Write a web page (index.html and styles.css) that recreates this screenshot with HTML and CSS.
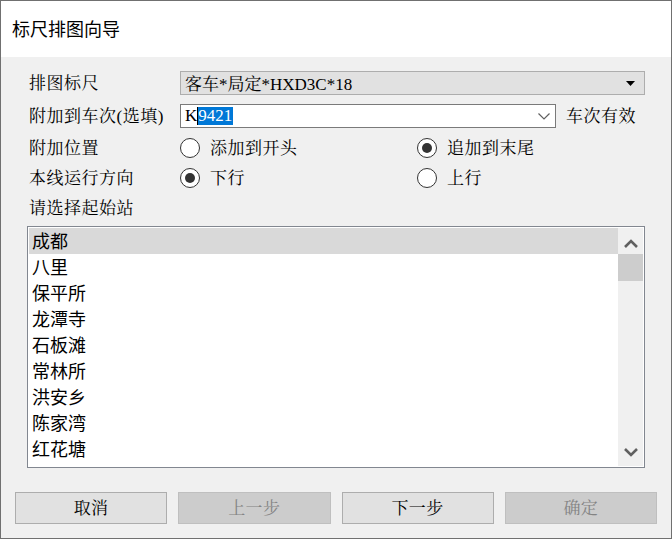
FILE: index.html
```html
<!DOCTYPE html>
<html lang="zh-CN">
<head>
  <meta charset="UTF-8">
  <title>标尺排图向导</title>
  <link rel="stylesheet" href="styles.css">
</head>
<body>
  <div class="dialog">
    <!-- Title bar -->
    <div class="titlebar">标尺排图向导</div>

    <div class="dialog-body">
      <!-- Wizard form -->
      <div class="form">
        <div class="row row-combo">
          <span class="label">排图标尺</span>
          <div class="combo combo-static">
            <span class="combo-text">客车*局定*HXD3C*18</span>
            <svg class="combo-arrow" width="9" height="5" viewBox="0 0 9 5"><path d="M0 0h9L4.5 5z" fill="#000"/></svg>
          </div>
        </div>

        <div class="row row-combo row-train">
          <span class="label">附加到车次(选填)</span>
          <div class="combo combo-edit">
            <span class="combo-text">K<span class="caret"></span><span class="selected">9421</span></span>
            <svg class="combo-chevron" width="12" height="7" viewBox="0 0 12 7"><path d="M0.5 0.5L6 6l5.5-5.5" fill="none" stroke="#606060" stroke-width="1.2"/></svg>
          </div>
          <span class="hint">车次有效</span>
        </div>

        <div class="row row-radio row-position">
          <span class="label">附加位置</span>
          <label class="option"><span class="radio"></span><span class="option-text">添加到开头</span></label>
          <label class="option"><span class="radio checked"></span><span class="option-text">追加到末尾</span></label>
        </div>

        <div class="row row-radio">
          <span class="label">本线运行方向</span>
          <label class="option"><span class="radio checked"></span><span class="option-text">下行</span></label>
          <label class="option"><span class="radio"></span><span class="option-text">上行</span></label>
        </div>

        <div class="row row-radio">
          <span class="label">请选择起始站</span>
        </div>
      </div>

      <!-- Station list -->
      <div class="listbox">
        <ul class="stations">
          <li class="active">成都</li>
          <li>八里</li>
          <li>保平所</li>
          <li>龙潭寺</li>
          <li>石板滩</li>
          <li>常林所</li>
          <li>洪安乡</li>
          <li>陈家湾</li>
          <li>红花塘</li>
        </ul>
        <div class="scrollbar">
          <svg class="scroll-btn" width="14" height="9" viewBox="0 0 14 9"><path d="M1 8L7 2l6 6" fill="none" stroke="#606060" stroke-width="2.6"/></svg>
          <div class="scroll-track"><div class="scroll-thumb"></div></div>
          <svg class="scroll-btn" width="14" height="9" viewBox="0 0 14 9"><path d="M1 1l6 6 6-6" fill="none" stroke="#606060" stroke-width="2.6"/></svg>
        </div>
      </div>

      <!-- Wizard buttons -->
      <div class="buttons">
        <button class="btn">取消</button>
        <button class="btn" disabled>上一步</button>
        <button class="btn">下一步</button>
        <button class="btn" disabled>确定</button>
      </div>
    </div>
  </div>
</body>
</html>
```

FILE: styles.css
```css
* {
    box-sizing: border-box;
}

body {
    margin: 0;
    background-color: #f0f0f0;
    font-family: "Liberation Serif", "Noto Serif CJK SC", "Noto Sans CJK SC", serif;
    color: #000;
}

/* Dialog frame */
.dialog {
    width: 672px;
    height: 539px;
    border: 1px solid #707070;
    background-color: #f0f0f0;
    display: flex;
    flex-direction: column;
    overflow: hidden;
}

.titlebar {
    height: 56px;
    background-color: #fff;
    padding-left: 11px;
    padding-bottom: 3px;
    display: flex;
    align-items: center;
    font-family: "Noto Sans CJK SC", sans-serif;
    font-size: 18px;
}

.dialog-body {
    flex: 1;
    padding: 14px 14px 0 14px;
    display: flex;
    flex-direction: column;
}

/* Form rows */
.form {
    display: flex;
    flex-direction: column;
    padding-left: 13px;
}

.row {
    display: flex;
    align-items: center;
    font-size: 17px;
}

.label {
    width: 152px;
    flex-shrink: 0;
    padding-left: 1px;
    padding-bottom: 4px;
    letter-spacing: 0.5px;
    white-space: nowrap;
}

.row-combo {
    height: 24px;
}

.row-train {
    margin-top: 9px;
}

.row-radio {
    height: 28px;
    margin-top: 2px;
}

.row-position {
    margin-top: 6px;
}

/* Combo boxes */
.combo {
    height: 24px;
    display: flex;
    align-items: center;
    justify-content: space-between;
    padding: 0 9px 0 4px;
}

.combo-static {
    width: 465px;
    background-color: #e1e1e1;
    border: 1px solid #adadad;
}

.combo-edit {
    width: 376px;
    background-color: #fff;
    border: 1px solid #7a7a7a;
    padding-right: 5px;
}

.combo-text {
    display: flex;
    align-items: center;
    white-space: nowrap;
    padding-bottom: 1px;
}

.caret {
    width: 1px;
    height: 18px;
    background-color: #000;
}

.selected {
    background-color: #0078d7;
    color: #fff;
    line-height: 18px;
    padding-right: 1px;
}

.hint {
    margin-left: 10px;
    padding-bottom: 3px;
    letter-spacing: 0.5px;
}

/* Radio buttons */
.option {
    display: flex;
    align-items: center;
    width: 237px;
}

.option-text {
    padding-bottom: 3px;
    letter-spacing: 0.5px;
}

.radio {
    width: 20px;
    height: 20px;
    border: 1px solid #333;
    border-radius: 50%;
    background-color: #fff;
    margin-right: 10px;
    display: flex;
    align-items: center;
    justify-content: center;
}

.radio.checked::after {
    content: "";
    width: 10px;
    height: 10px;
    border-radius: 50%;
    background-color: #333;
}

/* Station list */
.listbox {
    margin-top: 4px;
    margin-left: 12px;
    width: 618px;
    height: 242px;
    border: 1px solid #828790;
    background-color: #fff;
    padding: 1px;
    display: flex;
}

.stations {
    flex: 1;
    margin: 0;
    padding: 0;
    list-style: none;
    font-family: "Noto Sans CJK SC", sans-serif;
    font-size: 18px;
    overflow: hidden;
}

.stations li {
    height: 26px;
    line-height: 24px;
    padding-left: 3px;
}

.stations li.active {
    background-color: #d9d9d9;
}

.scrollbar {
    width: 25px;
    background-color: #f0f0f0;
    display: flex;
    flex-direction: column;
    align-items: center;
}

.scroll-btn {
    flex-shrink: 0;
    margin: 11px 0 6px;
}

.scrollbar .scroll-btn:last-child {
    margin: 6px 0 9px;
}

.scroll-track {
    flex: 1;
    width: 100%;
}

.scroll-thumb {
    height: 27px;
    background-color: #cdcdcd;
}

/* Bottom buttons */
.buttons {
    margin-top: 24px;
    display: grid;
    grid-template-columns: repeat(4, 1fr);
    column-gap: 11px;
}

.btn {
    height: 32px;
    background-color: #e1e1e1;
    border: 1px solid #adadad;
    font-family: inherit;
    font-size: 17px;
    letter-spacing: 0.5px;
    color: #000;
    padding: 0 0 3px 0;
}

.btn:disabled {
    background-color: #cccccc;
    border-color: #bfbfbf;
    color: #838383;
}
```
